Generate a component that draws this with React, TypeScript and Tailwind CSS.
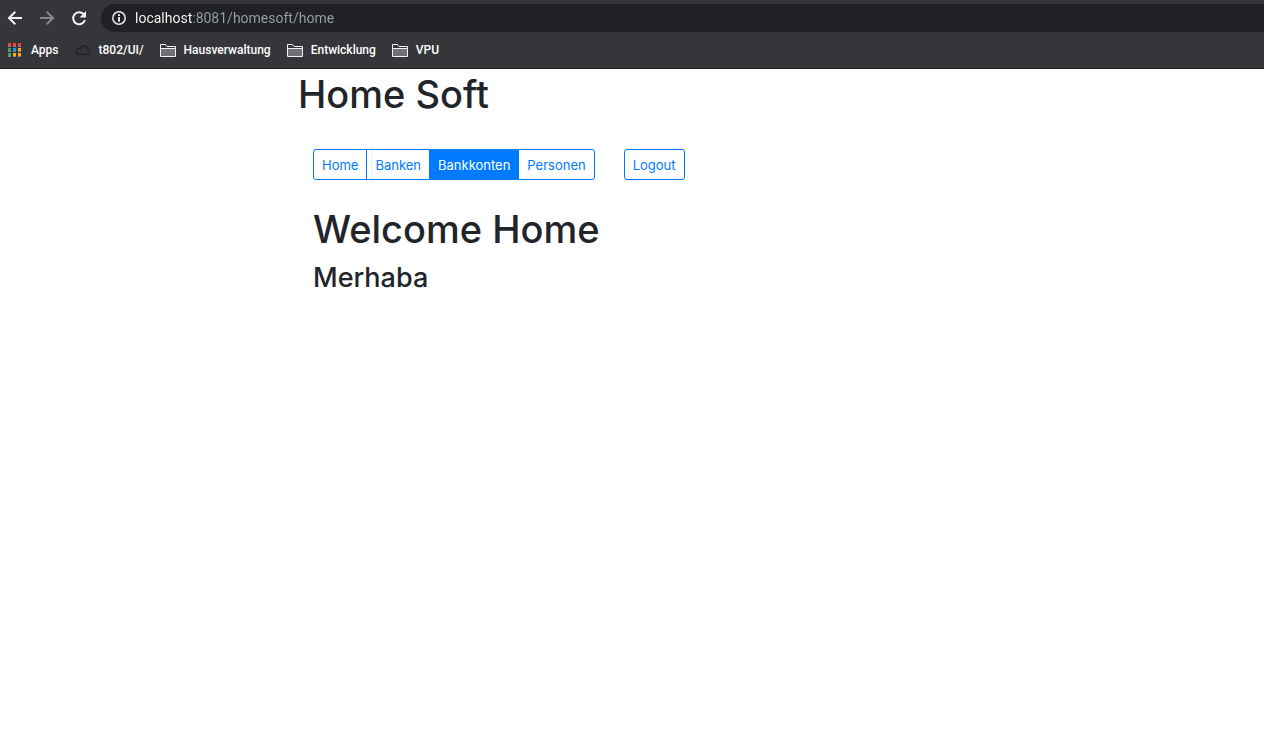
import React from "react";

function BackIcon() {
  return (
    <svg viewBox="0 0 16 16" className="size-4" fill="none" stroke="#f1f3f4" strokeWidth="2" aria-hidden="true">
      <path d="M15 8H2.5M8.3 1.7 2 8l6.3 6.3" />
    </svg>
  );
}

function ForwardIcon() {
  return (
    <svg viewBox="0 0 16 16" className="size-4" fill="none" stroke="#868789" strokeWidth="2" aria-hidden="true">
      <path d="M1 8h12.5M7.7 1.7 14 8l-6.3 6.3" />
    </svg>
  );
}

function ReloadIcon() {
  return (
    <svg viewBox="0 0 16 16" className="size-4" aria-hidden="true">
      <path d="M12.6 4.2A6 6 0 1 0 13.9 10" fill="none" stroke="#f1f3f4" strokeWidth="2" />
      <path d="M15 1v6.6H8.6z" fill="#f1f3f4" />
    </svg>
  );
}

function InfoIcon() {
  return (
    <svg viewBox="0 0 14 14" className="size-3.5 shrink-0" aria-hidden="true">
      <circle cx="7" cy="7" r="6.2" fill="none" stroke="#e8eaed" strokeWidth="1.5" />
      <path d="M6 3.2h2V5H6zM6 6h2v4.8H6z" fill="#e8eaed" />
    </svg>
  );
}

function AppsIcon() {
  const colors = ["#f44336", "#f44336", "#f44336", "#34a853", "#1a8cff", "#ffab00", "#34a853", "#ffab00", "#ffab00"];
  return (
    <svg viewBox="0 0 13 14" className="h-3.5 w-[13px]" shapeRendering="crispEdges" aria-hidden="true">
      {colors.map((c, i) => (
        <g key={i}>
          <rect x={(i % 3) * 5} y={Math.floor(i / 3) * 5} width="3" height="3" fill={c} />
          <rect x={(i % 3) * 5} y={Math.floor(i / 3) * 5 + 3} width="3" height="1" fill="#85868a" />
        </g>
      ))}
    </svg>
  );
}

function CloudIcon() {
  return (
    <svg viewBox="0 0 16 12" className="h-3 w-4" fill="none" stroke="#252629" strokeWidth="1.8" aria-hidden="true">
      <path d="M4 10.4h8.6a2.5 2.5 0 0 0 .4-5A4.6 4.6 0 0 0 4.4 4.6 2.9 2.9 0 0 0 4 10.4z" />
    </svg>
  );
}

function FolderIcon() {
  return (
    <svg viewBox="0 0 16 13" className="h-[13px] w-4" aria-hidden="true">
      <path d="M1 5h14v7H1z" fill="#707174" />
      <path d="M.5 12.5V.5h5l1.5 2h8.5v10zM.5 4.5h15" fill="none" stroke="#f1f3f4" />
    </svg>
  );
}

const bookmarks = [
  { label: "Apps", icon: <AppsIcon />, gap: "gap-2.5" },
  { label: "t802/UI/", icon: <CloudIcon />, gap: "gap-2" },
  { label: "Hausverwaltung", icon: <FolderIcon />, gap: "gap-2" },
  { label: "Entwicklung", icon: <FolderIcon />, gap: "gap-2" },
  { label: "VPU", icon: <FolderIcon />, gap: "gap-2" },
];

function BrowserBar() {
  return (
    <header className="border-b border-[#1f2023] bg-[#35363a] pt-1 font-['Roboto','Liberation_Sans',sans-serif]">
      <div className="flex items-center">
        <div className="flex gap-4 pr-3.5 pl-[7px]">
          <button aria-label="Back"><BackIcon /></button>
          <button aria-label="Forward"><ForwardIcon /></button>
          <button aria-label="Reload"><ReloadIcon /></button>
        </div>
        <div className="flex h-7 flex-1 items-center gap-[9px] rounded-l-full bg-[#202124] pl-[11px]">
          <InfoIcon />
          <input
            aria-label="Address"
            defaultValue="localhost:8081/homesoft/home"
            className="flex-1 bg-[linear-gradient(90deg,#fff_57px,#9aa0a6_57px)] bg-clip-text text-sm text-transparent outline-none"
          />
        </div>
      </div>
      <nav aria-label="Bookmarks" className="flex h-9 items-center gap-4 px-2 text-xs font-medium text-white">
        {bookmarks.map((b) => (
          <a key={b.label} href="#" className={`flex items-center ${b.gap}`}>
            {b.icon}
            {b.label}
          </a>
        ))}
      </nav>
    </header>
  );
}

const pages = ["Home", "Banken", "Bankkonten", "Personen"];

export default function App() {
  return (
    <div className="min-h-screen bg-white font-['Inter','Liberation_Sans',sans-serif] text-[#212529]">
      <BrowserBar />
      <main className="mx-auto max-w-[668px]">
        <h1 className="text-[38px] leading-[50px] font-medium">Home Soft</h1>
        <div className="px-[15px] pt-[30px]">
          <nav aria-label="Main" className="relative flex gap-[29px] text-[13px] leading-[21px] text-[#007bff]">
            <div className="flex">
              {pages.map((p) => (
                <button
                  key={p}
                  className={`-ml-px border border-[#007bff] px-2 pt-[5px] pb-[3px] first:ml-0 first:rounded-l-[3px] last:rounded-r-[3px] ${
                    p === "Bankkonten" ? "bg-[#007bff] text-white" : ""
                  }`}
                >
                  {p}
                </button>
              ))}
            </div>
            <button className="rounded-[3px] border border-[#007bff] px-2 pt-[5px] pb-[3px]">Logout</button>
            <span className="pointer-events-none absolute -inset-y-1 left-[58px] w-px bg-[#007bff]/10" />
          </nav>
          <h1 className="mt-[25px] mb-2 text-[38px] leading-12 font-medium">Welcome Home</h1>
          <h3 className="text-[27px] leading-[34px] font-medium">Merhaba</h3>
        </div>
      </main>
    </div>
  );
}
